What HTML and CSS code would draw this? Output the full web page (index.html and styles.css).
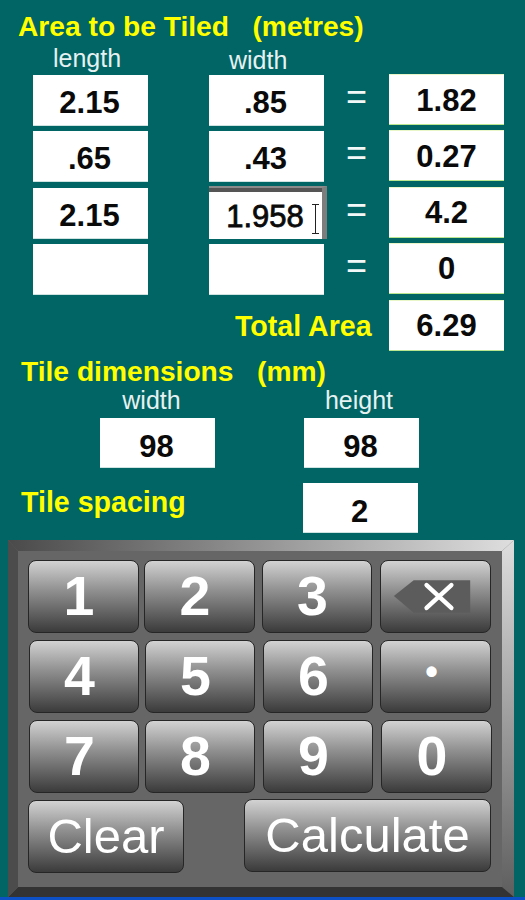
FILE: index.html
```html
<!DOCTYPE html>
<html lang="en">
<head>
<meta charset="utf-8">
<title>Tile Calculator</title>
<link rel="stylesheet" href="styles.css">
</head>
<body>
<main class="screen">
  <section class="area">
    <h1 class="heading area-heading">Area to be Tiled   (metres)</h1>
    <div class="area-labels">
      <span class="label length-label">length</span>
      <span class="label width-label">width</span>
    </div>
    <div class="area-grid">
      <div class="box">2.15</div><div class="box">.85</div><div class="eq">=</div><div class="box result">1.82</div>
      <div class="box">.65</div><div class="box">.43</div><div class="eq">=</div><div class="box result">0.27</div>
      <div class="box">2.15</div>
      <div class="box focused">1.958
        <svg class="ibeam" viewBox="0 0 9 30" width="9" height="30"><path d="M1 .5h7M1 29.5h7M4.500 .5v29" fill="none" stroke="#222" stroke-width="1"/></svg>
      </div>
      <div class="eq">=</div><div class="box result">4.2</div>
      <div class="box"></div><div class="box"></div><div class="eq">=</div><div class="box result">0</div>
    </div>
    <div class="total-row">
      <span class="heading total-label">Total Area</span>
      <div class="box result total-box">6.29</div>
    </div>
  </section>

  <section class="tile">
    <h2 class="heading tile-heading">Tile dimensions   (mm)</h2>
    <div class="tile-grid">
      <div class="tile-col">
        <span class="label tile-label">width</span>
        <div class="box tile-box">98</div>
      </div>
      <div class="tile-col">
        <span class="label tile-label">height</span>
        <div class="box tile-box">98</div>
      </div>
    </div>
    <div class="spacing-row">
      <span class="heading spacing-label">Tile spacing</span>
      <div class="box tile-box spacing-box">2</div>
    </div>
  </section>

  <section class="keypad">
    <svg class="bevel" viewBox="0 0 506 357" width="506" height="357" aria-hidden="true">
      <defs>
        <linearGradient id="bevelTop" x1="0" y1="0" x2="1" y2="0">
          <stop offset="0" stop-color="#4a4a4a"/>
          <stop offset="1" stop-color="#dedede"/>
        </linearGradient>
        <linearGradient id="bevelRight" x1="0" y1="0" x2="0" y2="1">
          <stop offset="0" stop-color="#dedede"/>
          <stop offset="1" stop-color="#5e5e5e"/>
        </linearGradient>
      </defs>
      <polygon points="0,0 506,0 494,11 10,11" fill="url(#bevelTop)"/>
      <polygon points="506,0 506,357 494,347 494,11" fill="url(#bevelRight)"/>
      <polygon points="0,357 506,357 494,347 10,347" fill="#333"/>
      <polygon points="0,0 10,11 10,347 0,357" fill="#4c4c4c"/>
    </svg>
    <div class="key-row row-1">
      <button class="key">1</button><button class="key">2</button><button class="key narrow">3</button>
      <button class="key back" aria-label="Backspace">
        <svg viewBox="0 0 110 72" width="110" height="72"><polygon points="13,35 33,19 90,19 90,52 33,52" fill="#5c5c5c"/><path d="M46 24 L71 47 M71 24 L46 47" stroke="#fff" stroke-width="4.500" stroke-linecap="round"/></svg>
      </button>
    </div>
    <div class="key-row row-2">
      <button class="key">4</button><button class="key">5</button><button class="key narrow">6</button><button class="key dot">•</button>
    </div>
    <div class="key-row row-3">
      <button class="key">7</button><button class="key">8</button><button class="key narrow">9</button><button class="key">0</button>
    </div>
    <div class="key-row row-4">
      <button class="key word clear">Clear</button>
      <button class="key word calculate">Calculate</button>
    </div>
  </section>
  <div class="status-strip"></div>
</main>
</body>
</html>
```
FILE: styles.css
```css
* {
  box-sizing: border-box;
}

html,
body {
  margin: 0;
  padding: 0;
}

body {
  background: #006564;
  font-family: "Liberation Sans", Arial, sans-serif;
}

.screen {
  width: 525px;
  height: 900px;
  overflow: hidden;
  display: flex;
  flex-direction: column;
}

.heading {
  margin: 0;
  color: #ffff00;
  font-size: 28.2px;
  font-weight: 700;
  line-height: 32px;
  white-space: pre;
}

.label {
  color: #e6f1f1;
  font-size: 25px;
  line-height: 30px;
}

.box {
  background: #fff;
  color: #0a0a0a;
  font-size: 31px;
  font-weight: 700;
  display: flex;
  align-items: center;
  justify-content: center;
  padding: 6px 2px 0 0;
  width: 115px;
  height: 51px;
  border-bottom: 1px solid #cfe3e0;
}

/* Area section */
.area {
  height: 357px;
  padding-top: 10px;
}

.area-heading {
  margin-left: 18px;
  margin-bottom: 1px;
}

.area-labels {
  display: grid;
  grid-template-columns: 176px 115px;
  margin-left: 33px;
  height: 32px;
}

.length-label {
  margin-left: 20px;
}

.width-label {
  margin-left: 20px;
  padding-top: 2px;
}

.area-grid {
  display: grid;
  grid-template-columns: 115px 176px 65px 115px;
  row-gap: 5.33px;
  grid-auto-rows: 51px;
  margin-left: 33px;
}

.area-grid > .box:nth-child(4n + 2) {
  margin-left: 61px;
}

.eq {
  color: #f2f7f7;
  font-size: 36px;
  line-height: 42px;
  text-align: center;
  padding-top: 1px;
}

.result {
  align-self: start;
  margin-top: -1px;
  padding: 2px 0 0;
  border-top: 1px solid #e8f6c8;
  border-bottom: 1px solid #b9e68f;
}

.focused {
  position: relative;
  width: 118px;
  height: 53px;
  margin-top: -2px;
  padding: 8px 1px 0 0;
  font-weight: 400;
  -webkit-text-stroke: 0.8px #0a0a0a;
  border-top: 2px solid #8a8a8a;
  border-right: 5px solid #7d7d7d;
  border-bottom: 0;
  box-shadow: inset 0 4px 0 #555;
}

.ibeam {
  position: absolute;
  left: 102px;
  top: 16px;
}

.total-row {
  display: flex;
  align-items: center;
  margin-top: 6px;
  padding-left: 235px;
}

.total-label,
.spacing-label {
  font-size: 28.6px;
}

.total-label {
  width: 154px;
}

/* Tile section */
.tile {
  height: 183px;
}

.tile-heading {
  margin-left: 21px;
  line-height: 28px;
  height: 28px;
}

.tile-grid {
  display: flex;
  margin-left: 100px;
  column-gap: 89px;
}

.tile-col {
  display: flex;
  flex-direction: column;
  width: 115px;
}

.tile-label {
  height: 31px;
  margin-bottom: 2px;
  margin-right: 12px;
  text-align: center;
}

.tile-col:last-child .tile-label {
  margin-right: 5px;
}

.tile-box {
  height: 50px;
  padding-top: 9px;
}

.spacing-row {
  display: flex;
  align-items: center;
  margin-top: 15px;
  margin-left: 21px;
}

.spacing-label {
  width: 282px;
  margin-top: -12px;
}

/* Keypad */
.keypad {
  position: relative;
  width: 506px;
  height: 357px;
  margin-left: 8px;
  padding-top: 20px;
  background: #666;
  display: flex;
  flex-direction: column;
  row-gap: 7px;
}

.bevel {
  position: absolute;
  left: 0;
  top: 0;
}

.key-row {
  position: relative;
  display: flex;
  height: 73px;
}

.key {
  width: 111px;
  height: 73px;
  margin: 0;
  padding: 0 9px 0 0;
  border: 1px solid #262626;
  border-radius: 8px;
  background: linear-gradient(#d2d2d2 0%, #8f8f8f 42%, #3b3b3b 100%);
  color: #fff;
  font-family: "Liberation Sans", Arial, sans-serif;
  font-size: 55.5px;
  font-weight: 700;
  line-height: 1;
  display: flex;
  align-items: center;
  justify-content: center;
}

.narrow {
  width: 110px;
}

.row-1,
.row-4 {
  padding-left: 20px;
}

.row-2,
.row-3 {
  padding-left: 21px;
}

.row-1 .key:nth-child(2) {
  margin-left: 5px;
}

.row-1 .key:nth-child(3) {
  margin-left: 7px;
}

.row-1 .key:nth-child(4) {
  margin-left: 8px;
}

.row-2 .key:first-child,
.row-3 .key:first-child {
  width: 110px;
}

.row-2 .key:nth-child(2),
.row-3 .key:nth-child(2) {
  width: 110px;
  margin-left: 6px;
}

.row-2 .key:nth-child(3),
.row-3 .key:nth-child(3) {
  margin-left: 8px;
}

.row-2 .key:nth-child(4) {
  margin-left: 7px;
}

.row-3 .key:nth-child(4) {
  margin-left: 8px;
}

.back {
  padding: 0;
}

.dot {
  font-size: 36px;
  padding: 0 8px 9px 0;
}

.word {
  font-size: 49px;
  font-weight: 400;
  padding: 0;
}

.clear {
  width: 156px;
}

.calculate {
  width: 247px;
  margin-left: 60px;
  margin-top: -1px;
}

.status-strip {
  height: 3px;
  background: #0d4fc4;
}
```
